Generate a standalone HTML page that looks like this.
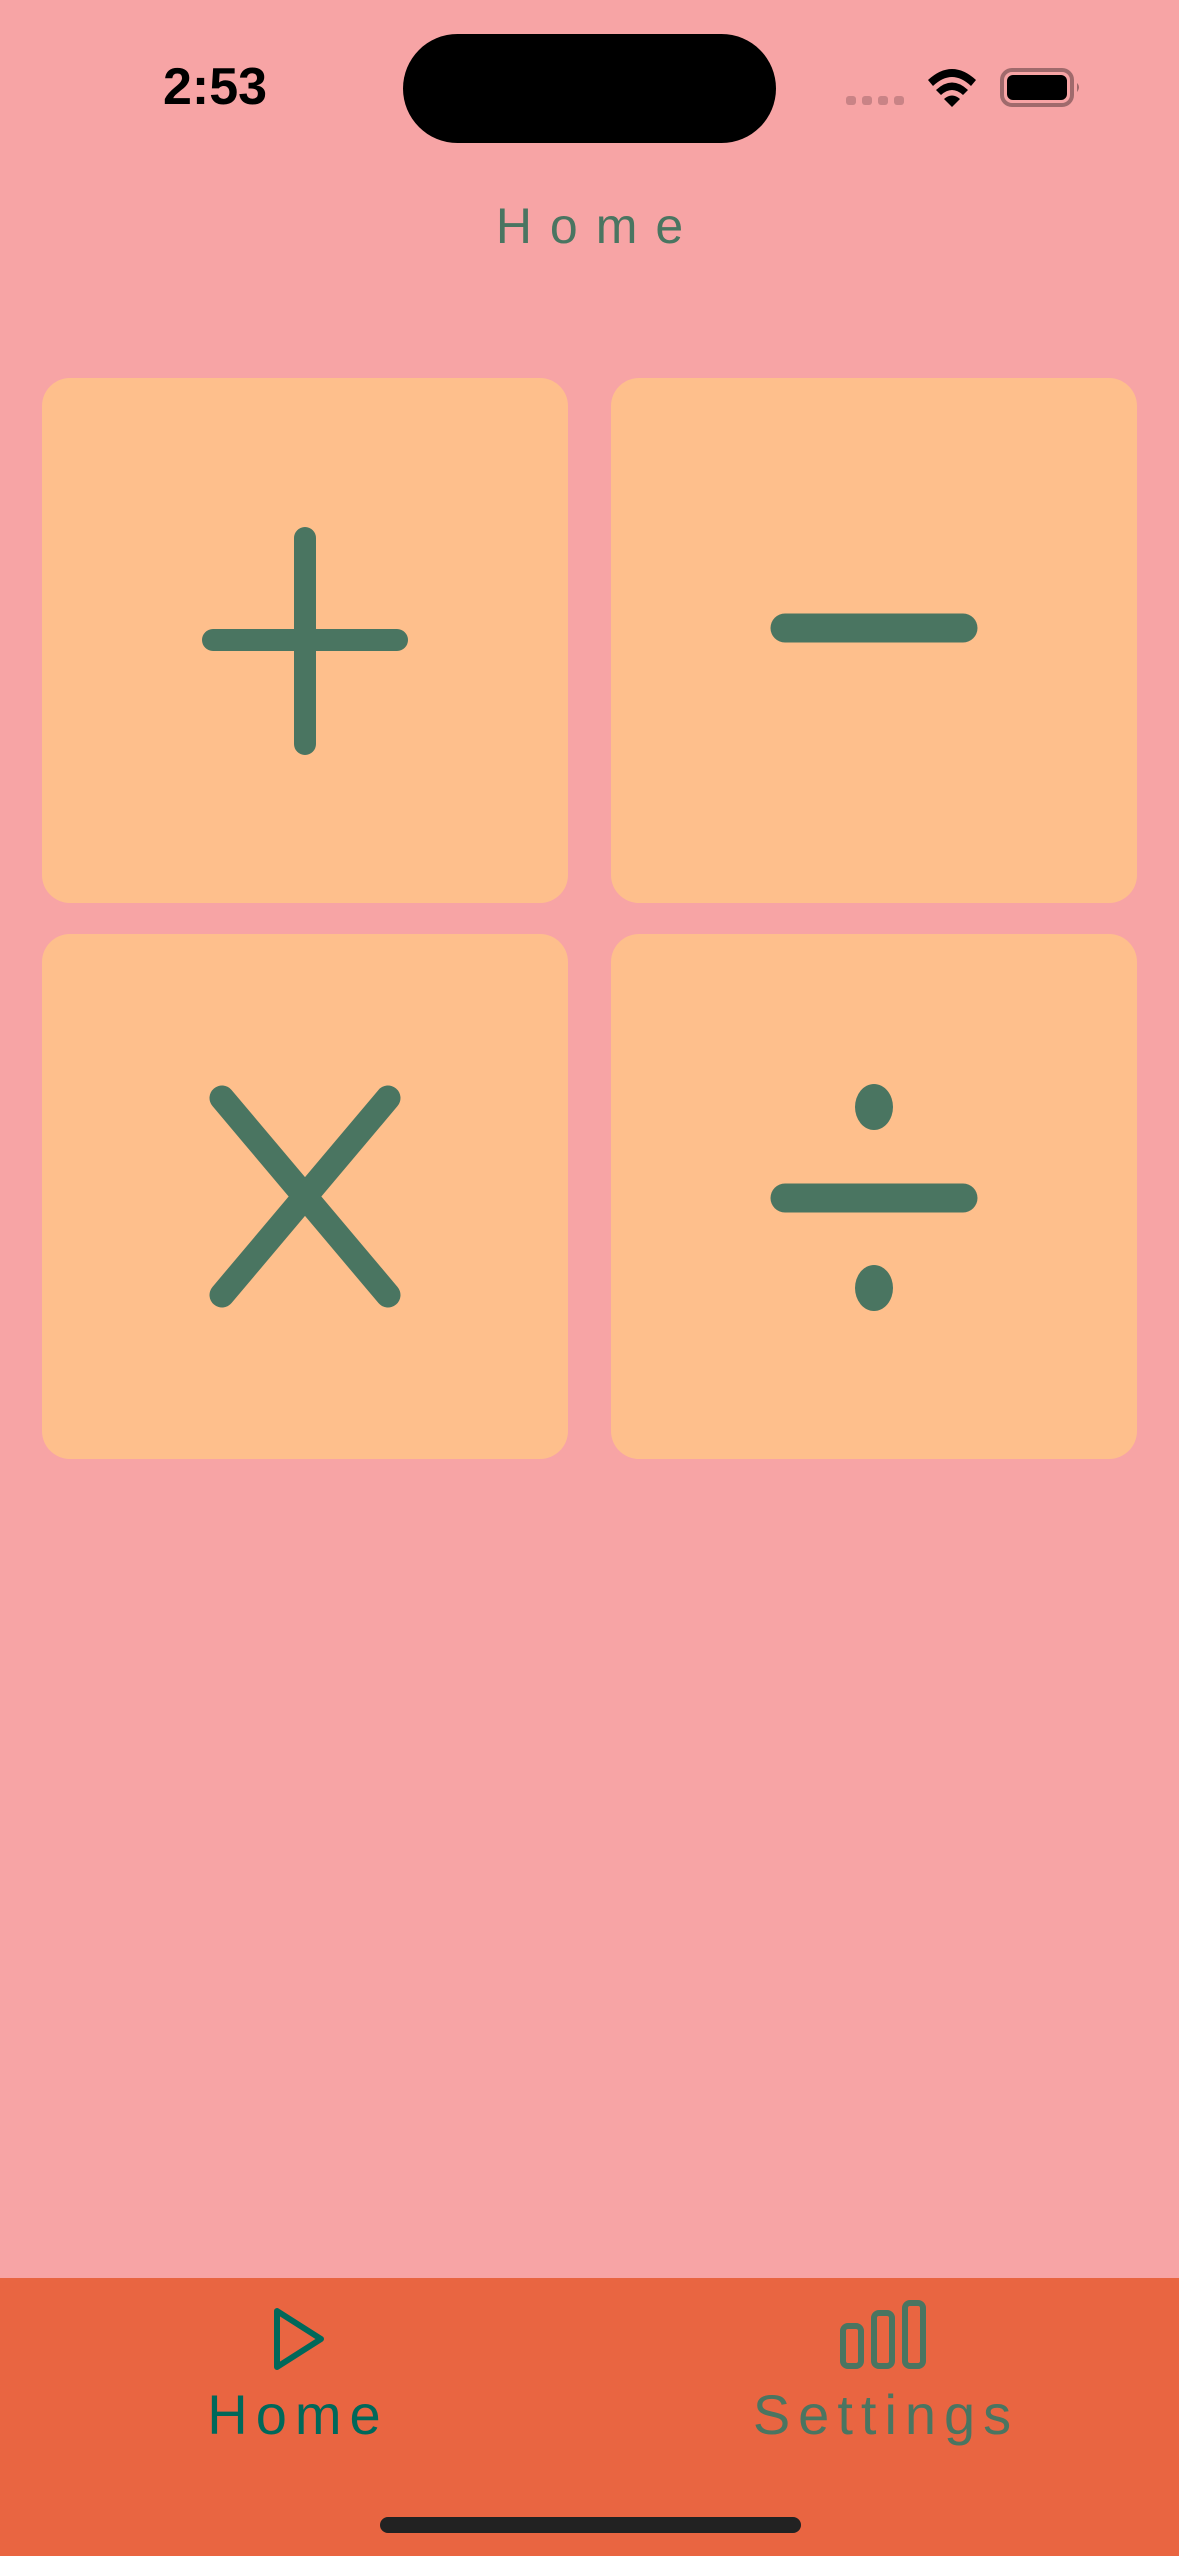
<!DOCTYPE html>
<html><head><meta charset="utf-8"><style>
html,body{margin:0;padding:0}
body{width:1179px;height:2556px;background:#F7A4A5;position:relative;overflow:hidden;font-family:"Liberation Sans",sans-serif}
.abs{position:absolute}
.tile{position:absolute;background:#FEBF8C;border-radius:28px;width:526px;height:525px}
</style></head><body>
<div class="abs" style="left:150px;top:55px;width:130px;text-align:center;font-size:52px;font-weight:bold;color:#000;line-height:64px">2:53</div>
<div class="abs" style="left:403px;top:34px;width:373px;height:109px;background:#000;border-radius:55px"></div>
<svg class="abs" style="left:840px;top:60px" width="250" height="60" viewBox="840 60 250 60">
<g fill="#C98386"><rect x="846" y="96" width="10" height="9" rx="3"/><rect x="862" y="96" width="10" height="9" rx="3"/><rect x="878" y="96" width="10" height="9" rx="3"/><rect x="894" y="96" width="10" height="9" rx="3"/></g>
<path d="M928 80 Q952 58 976 80 L971 86 Q952 68 933 86Z M936 90 Q952 75 968 90 L963 95 Q952 85 941 95Z M944 99 Q952 92 960 99 L952 107Z" fill="#000"/>
<rect x="1002" y="70" width="70" height="35" rx="10" fill="none" stroke="#A06A6C" stroke-width="4"/>
<rect x="1007" y="75" width="60" height="25" rx="6" fill="#000"/>
<path d="M1077 83 q4 4 0 9z" fill="#A06A6C"/>
</svg>
<div class="abs" style="left:0;width:1179px;top:196px;text-align:center;font-size:50px;letter-spacing:18px;text-indent:18px;color:#4A7561;line-height:60px">Home</div>
<div class="tile" style="left:42px;top:378px"></div>
<div class="tile" style="left:611px;top:378px"></div>
<div class="tile" style="left:42px;top:934px"></div>
<div class="tile" style="left:611px;top:934px"></div>
<svg class="abs" style="left:0;top:0" width="1179" height="1500">
<g stroke="#4A7561" stroke-linecap="round" fill="none">
<path d="M305 538V744M213 640H397" stroke-width="22"/>
<path d="M785 628H963" stroke-width="29"/>
<path d="M222 1098L388 1295M388 1098L222 1295" stroke-width="25"/>
<path d="M785 1198H963" stroke-width="29"/>
</g>
<g fill="#4A7561"><ellipse cx="874" cy="1107" rx="19" ry="23"/><ellipse cx="874" cy="1288" rx="19" ry="23"/></g>
</svg>
<div class="abs" style="left:0;top:2278px;width:1179px;height:278px;background:#E96541"></div>
<svg class="abs" style="left:0;top:2278px" width="1179" height="278" viewBox="0 2278 1179 278">
<path d="M277 2311V2367L321 2339Z" fill="none" stroke="#00685A" stroke-width="6" stroke-linejoin="round"/>
<g fill="none" stroke="#4A7561" stroke-width="6"><rect x="843" y="2326" width="18" height="40" rx="5"/><rect x="874" y="2313" width="18" height="53" rx="5"/><rect x="905" y="2303" width="18" height="63" rx="5"/></g>
<rect x="380" y="2517" width="421" height="16" rx="8" fill="#222"/>
</svg>
<div class="abs" style="left:144px;width:300px;top:2382px;text-align:center;font-size:56px;letter-spacing:8px;text-indent:8px;color:#00685A;line-height:66px">Home</div>
<div class="abs" style="left:682px;width:400px;top:2382px;text-align:center;font-size:56px;letter-spacing:8px;text-indent:8px;color:#4A7561;line-height:66px">Settings</div>
</body></html>
